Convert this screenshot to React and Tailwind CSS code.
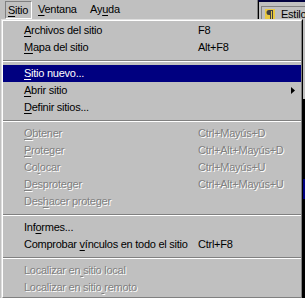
import React from 'react';

const items = [
  { label: 'Archivos del sitio', key: 0, shortcut: 'F8' },
  { label: 'Mapa del sitio', key: 0, shortcut: 'Alt+F8' },
  'sep',
  { label: 'Sitio nuevo...', key: 0, active: true },
  { label: 'Abrir sitio', key: 0, submenu: true },
  { label: 'Definir sitios...', key: 0 },
  'sep',
  { label: 'Obtener', key: 0, shortcut: 'Ctrl+Mayús+D', disabled: true },
  { label: 'Proteger', key: 0, shortcut: 'Ctrl+Alt+Mayús+D', disabled: true },
  { label: 'Colocar', key: 2, shortcut: 'Ctrl+Mayús+U', disabled: true },
  { label: 'Desproteger', key: 0, shortcut: 'Ctrl+Alt+Mayús+U', disabled: true },
  { label: 'Deshacer proteger', key: 3, disabled: true },
  'sep',
  { label: 'Informes...', key: 3 },
  { label: 'Comprobar vínculos en todo el sitio', key: 10, shortcut: 'Ctrl+F8' },
  'sep',
  { label: 'Localizar en sitio local', key: 12, disabled: true },
  { label: 'Localizar en sitio remoto', key: 18, disabled: true },
];

const Mnemonic = ({ text, at }) => (
  <span>
    {text.slice(0, at)}
    <span className="underline decoration-1 underline-offset-[2px]">{text[at]}</span>
    {text.slice(at + 1)}
  </span>
);

const MenuRow = ({ item }) => {
  const tone = item.active
    ? 'bg-[#000080] text-white'
    : item.disabled
    ? 'text-[#808080] [text-shadow:1px_1px_0_#ffffff]'
    : 'text-black';
  return (
    <div className={`flex h-[17px] items-center pl-[21px] pr-[6px] whitespace-nowrap ${tone}`}>
      <div className="w-[174px] shrink-0">
        <Mnemonic text={item.label} at={item.key} />
      </div>
      <div className="flex-1">{item.shortcut}</div>
      {item.submenu && (
        <svg width="4" height="7" viewBox="0 0 4 7">
          <path d="M0 0 L4 3.5 L0 7 Z" fill="#000" />
        </svg>
      )}
    </div>
  );
};

const Separator = () => (
  <div className="flex h-[9px] items-center">
    <div className="w-full h-[2px] border-t border-t-[#808080] border-b border-b-white" />
  </div>
);

export default function App() {
  return (
    <div className="relative w-[305px] h-[298px] overflow-hidden bg-[#c0c0c0] text-[11px] leading-none tracking-[-0.25px] text-black font-['Liberation_Sans',Arial,sans-serif]">
      {/* menu bar */}
      <div className="flex h-[19px]">
        <div className="ml-[5px] mt-[1px] h-[18px] w-[27px] pl-[2px] flex items-center border-t border-l border-t-[#808080] border-l-[#808080] border-b border-r border-b-white border-r-white">
          <Mnemonic text="Sitio" at={0} />
        </div>
        <div className="w-[52px] pl-[6px] flex items-center">
          <Mnemonic text="Ventana" at={0} />
        </div>
        <div className="pl-[6px] flex items-center">
          <Mnemonic text="Ayuda" at={2} />
        </div>
        <div className="ml-auto w-[48px] flex border-l border-l-[#808080]">
          <div className="w-[1px] bg-white" />
          <div className="flex-1 border-t-2 border-t-[#000040] border-l border-l-[#000000] pt-[4px] pl-[2px]">
            <div className="flex h-[16px] items-center gap-[5px] border-t border-l border-t-[#808080] border-l-[#808080] pl-[3px]">
              <svg width="11" height="12" viewBox="0 0 11 12">
                <rect x="0" y="0" width="10" height="12" fill="#e8c840" />
                <path d="M3 1 H8 V11 H7 V2 H6 V11 H5 V6 H4 A2.5 2.5 0 0 1 4 1 Z" fill="#404040" />
              </svg>
              <span>Estilo</span>
            </div>
          </div>
        </div>
      </div>

      {/* right edge of background window */}
      <div className="absolute right-0 top-[19px] w-[2px] h-[279px] flex flex-col">
        <div className="h-[80px] bg-[#c0c0c0]" />
        <div className="h-[80px] bg-black" />
        <div className="h-[20px] bg-[#000080]" />
        <div className="flex-1 bg-black" />
      </div>

      {/* dropdown menu */}
      <div className="absolute left-[1px] top-[19px] w-[302px] border border-t-[#dfdfdf] border-l-[#dfdfdf] border-r-black border-b-black">
        <div className="border border-t-white border-l-white border-r-[#808080] border-b-[#808080] bg-[#c0c0c0] py-[1px]">
          {items.map((it, i) =>
            it === 'sep' ? <Separator key={i} /> : <MenuRow key={i} item={it} />
          )}
        </div>
      </div>
    </div>
  );
}
